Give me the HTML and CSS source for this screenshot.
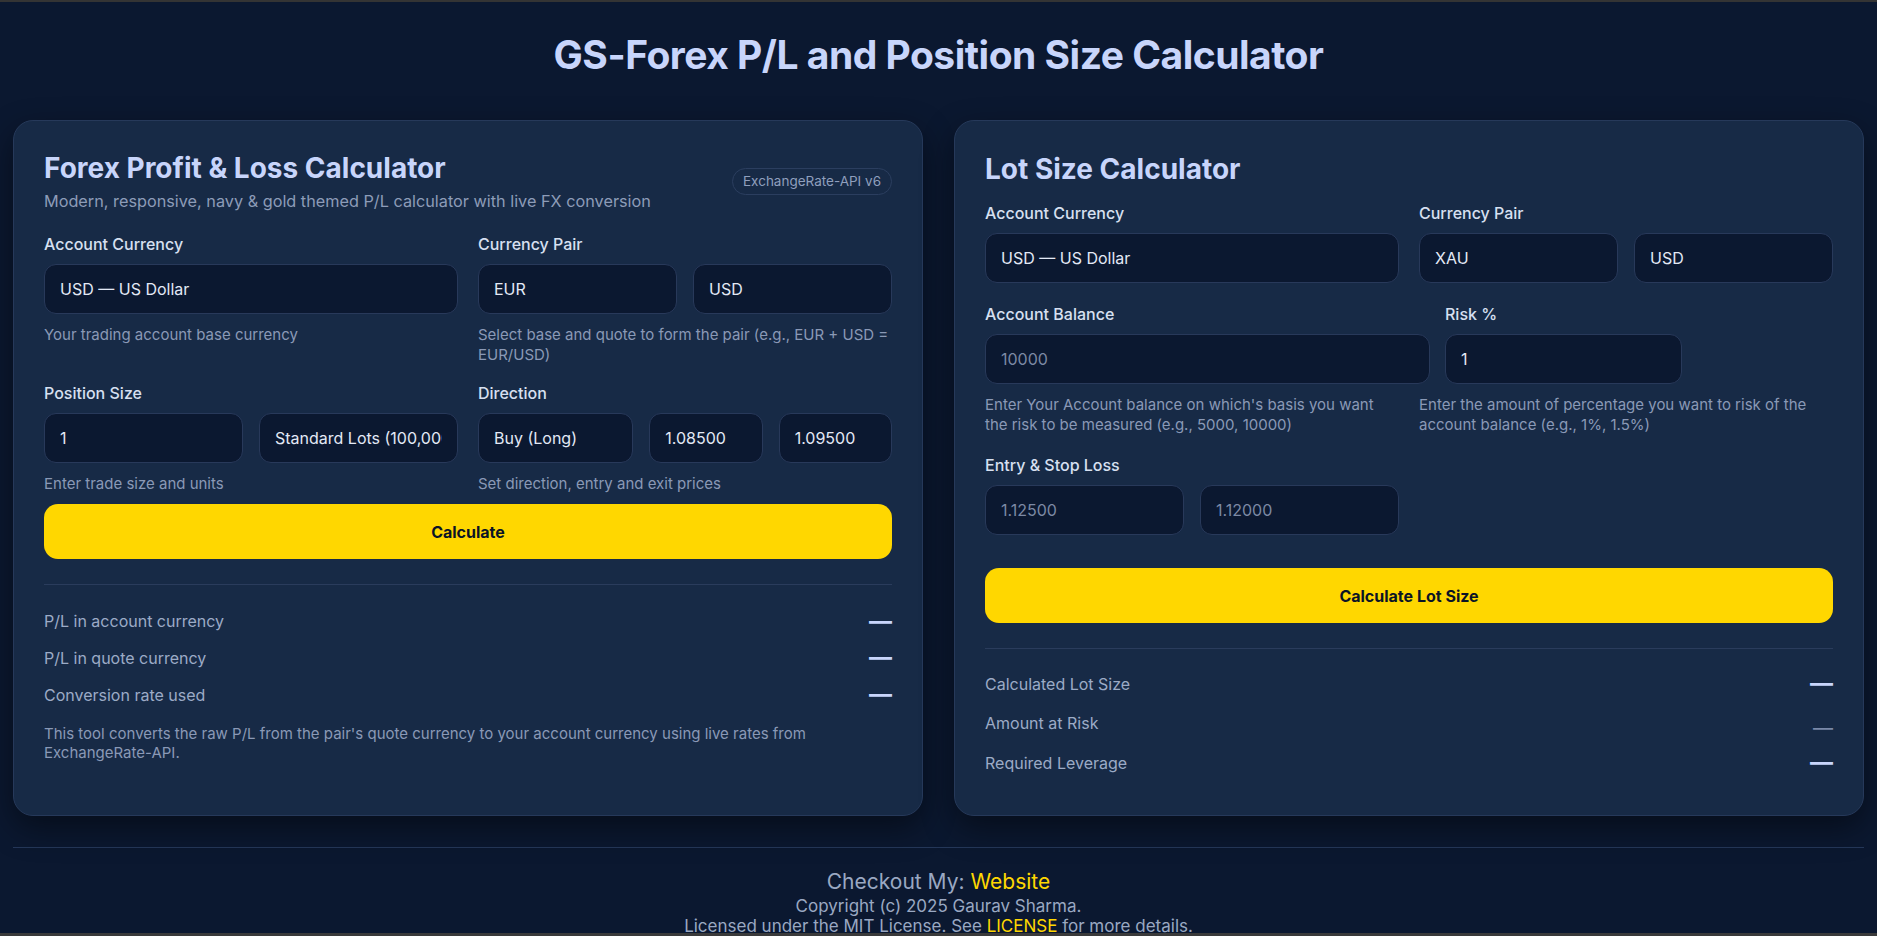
FILE: index.html
```html
<!DOCTYPE html>
<html lang="en">
<head>
<meta charset="utf-8">
<title>GS-Forex P/L and Position Size Calculator</title>
<link rel="stylesheet" href="styles.css">
</head>
<body>
<header class="page-head">
  <h1>GS-Forex P/L and Position Size Calculator</h1>
</header>
<main class="cards">
  <section class="card">
    <div class="card-head">
      <div>
        <h2 class="card-title">Forex Profit &amp; Loss Calculator</h2>
        <p class="card-sub">Modern, responsive, navy &amp; gold themed P/L calculator with live FX conversion</p>
      </div>
      <span class="badge">ExchangeRate-API v6</span>
    </div>
    <div class="fields">
      <div class="field">
        <label class="label">Account Currency</label>
        <select class="control"><option>USD — US Dollar</option></select>
        <p class="help">Your trading account base currency</p>
      </div>
      <div class="field">
        <label class="label">Currency Pair</label>
        <div class="split">
          <select class="control"><option>EUR</option></select>
          <select class="control"><option>USD</option></select>
        </div>
        <p class="help">Select base and quote to form the pair (e.g., EUR + USD = EUR/USD)</p>
      </div>
      <div class="field">
        <label class="label">Position Size</label>
        <div class="split">
          <input class="control" type="text" value="1">
          <select class="control"><option>Standard Lots (100,000 units)</option></select>
        </div>
        <p class="help">Enter trade size and units</p>
      </div>
      <div class="field">
        <label class="label">Direction</label>
        <div class="split3">
          <select class="control"><option>Buy (Long)</option></select>
          <input class="control" type="text" value="1.08500">
          <input class="control" type="text" value="1.09500">
        </div>
        <p class="help">Set direction, entry and exit prices</p>
      </div>
    </div>
    <button class="btn btn-left">Calculate</button>
    <div class="results results-left">
      <div class="row"><span>P/L in account currency</span><span class="val">—</span></div>
      <div class="row"><span>P/L in quote currency</span><span class="val">—</span></div>
      <div class="row"><span>Conversion rate used</span><span class="val">—</span></div>
    </div>
    <p class="note">This tool converts the raw P/L from the pair's quote currency to your account currency using live rates from ExchangeRate-API.</p>
  </section>

  <section class="card">
    <h2 class="card-title solo">Lot Size Calculator</h2>
    <div class="fields">
      <div class="field">
        <label class="label">Account Currency</label>
        <select class="control"><option>USD — US Dollar</option></select>
      </div>
      <div class="field">
        <label class="label">Currency Pair</label>
        <div class="split">
          <select class="control"><option>XAU</option></select>
          <select class="control"><option>USD</option></select>
        </div>
      </div>
    </div>
    <div class="balance-row">
      <div class="field">
        <label class="label">Account Balance</label>
        <input class="control" type="text" placeholder="10000">
      </div>
      <div class="field">
        <label class="label">Risk %</label>
        <input class="control" type="text" value="1">
      </div>
    </div>
    <div class="help-row">
      <p class="help">Enter Your Account balance on which's basis you want the risk to be measured (e.g., 5000, 10000)</p>
      <p class="help">Enter the amount of percentage you want to risk of the account balance (e.g., 1%, 1.5%)</p>
    </div>
    <div class="fields entry-fields">
      <div class="field">
        <label class="label">Entry &amp; Stop Loss</label>
        <div class="split">
          <input class="control" type="text" placeholder="1.12500">
          <input class="control" type="text" placeholder="1.12000">
        </div>
      </div>
    </div>
    <button class="btn btn-right">Calculate Lot Size</button>
    <div class="results results-right">
      <div class="row"><span>Calculated Lot Size</span><span class="val">—</span></div>
      <div class="row"><span>Amount at Risk</span><span class="val val-muted">—</span></div>
      <div class="row"><span>Required Leverage</span><span class="val">—</span></div>
    </div>
  </section>
</main>
<footer class="page-foot">
  <p class="checkout">Checkout My: <a href="#">Website</a></p>
  <p class="copy">Copyright (c) 2025 Gaurav Sharma.<br>Licensed under the MIT License. See <a href="#">LICENSE</a> for more details.</p>
</footer>
</body>
</html>
```

FILE: styles.css
```css
* { box-sizing: border-box; }

html {
  background: #333333;
  overflow: hidden;
}

body {
  margin: 0;
  height: 936px;
  overflow: hidden;
  border-top: 2px solid #343434;
  border-bottom: 3px solid #3a3a3a;
  background: #0b1830;
  font-family: Inter, "Liberation Sans", sans-serif;
  color: #dbe3f3;
}

.page-head {
  padding-top: 29px;
  margin-bottom: 42px;
  text-align: center;
}

.page-head h1 {
  margin: 0;
  font-size: 39px;
  font-weight: 700;
  line-height: normal;
  color: #c8d5fb;
  letter-spacing: -0.5px;
}

.cards {
  display: grid;
  grid-template-columns: 1fr 1fr;
  gap: 31px;
  padding: 0 13px;
}

.card {
  background: #172a46;
  border: 1px solid #26395a;
  border-radius: 20px;
  padding: 30px;
  box-shadow: 0 12px 32px rgba(0, 0, 0, 0.45);
}

.card-head {
  display: flex;
  justify-content: space-between;
  align-items: center;
  margin-bottom: 23px;
}

.card-title {
  margin: 0;
  font-size: 28px;
  font-weight: 700;
  color: #c8d5fb;
  line-height: normal;
}

.card-title.solo {
  margin: 1px 0 17px;
}

.card-sub {
  margin: 6px 0 0;
  font-size: 16.25px;
  line-height: normal;
  color: #8d9cb8;
}

.badge {
  height: 27px;
  display: inline-flex;
  align-items: center;
  padding: 0 10px;
  border: 1px solid #2b3e5f;
  border-radius: 999px;
  font-size: 13.5px;
  color: #8f9fbd;
}

.fields {
  display: grid;
  grid-template-columns: 1fr 1fr;
  column-gap: 20px;
  row-gap: 18px;
}

.field {
  display: flex;
  flex-direction: column;
  min-width: 0;
}

.label {
  display: block;
  margin-bottom: 10px;
  font-size: 16px;
  line-height: normal;
  font-weight: 500;
  color: #d7e0f1;
}

.control {
  -webkit-appearance: none;
  appearance: none;
  width: 100%;
  min-width: 0;
  height: 50px;
  padding: 0 15px;
  background: #0b1830;
  border: 1px solid #28395a;
  border-radius: 12px;
  font-family: inherit;
  font-size: 16px;
  color: #e3e9f6;
  outline: none;
}

.control::placeholder {
  color: #7c89a4;
}

.split {
  display: grid;
  grid-template-columns: 1fr 1fr;
  gap: 16px;
}

.split3 {
  display: grid;
  grid-template-columns: 1.37fr 1fr 1fr;
  gap: 16px;
}

.help {
  margin: 11px 0 0;
  font-size: 15px;
  line-height: 20px;
  color: #8a99b6;
}

.btn {
  display: block;
  width: 100%;
  height: 55px;
  border: none;
  border-radius: 14px;
  background: #ffd700;
  color: #0b1426;
  font-family: inherit;
  font-size: 16px;
  font-weight: 700;
  cursor: pointer;
}

.btn-left { margin-top: 10px; }
.btn-right { margin-top: 33px; }

.results {
  margin-top: 25px;
  border-top: 1px solid #2a3c5c;
}

.results-left { padding-top: 18px; }
.results-right { padding-top: 15px; padding-bottom: 2px; }

.row {
  display: flex;
  justify-content: space-between;
  align-items: center;
  font-size: 16px;
  color: #9cabc6;
}

.results-left .row { height: 36.67px; }
.results-right .row { height: 39.5px; }

.val {
  font-size: 23px;
  font-weight: 700;
  line-height: 1;
  color: #c8d5fb;
}

.val-muted {
  font-size: 20px;
  font-weight: 400;
  color: #7a89a9;
  margin-top: 10px;
}

.note {
  margin: 12.5px 0 0;
  font-size: 15px;
  line-height: 18.5px;
  color: #8a99b6;
}

.balance-row {
  display: grid;
  grid-template-columns: 445px 237px;
  column-gap: 15px;
  margin-top: 21px;
}

.help-row {
  display: grid;
  grid-template-columns: 1fr 1fr;
  column-gap: 20px;
}

.entry-fields {
  margin-top: 20px;
}

.page-foot {
  margin: 31px 13px 0;
  border-top: 1px solid #25385a;
  padding-top: 21px;
  text-align: center;
}

.page-foot p { margin: 0; }

.checkout {
  font-size: 21px;
  line-height: normal;
  color: #9aa8c2;
}

.copy {
  margin-top: 2px !important;
  font-size: 17px;
  line-height: 20px;
  color: #9aa8c2;
}

.page-foot a {
  color: #ffd700;
  text-decoration: none;
}
```
